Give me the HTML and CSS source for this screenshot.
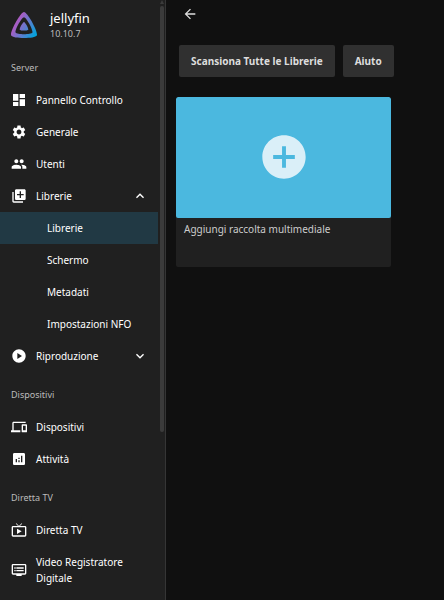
FILE: index.html
```html
<!DOCTYPE html>
<html lang="it">
<head>
<meta charset="utf-8">
<meta name="viewport" content="width=device-width, initial-scale=1">
<title>Librerie</title>
<link rel="stylesheet" href="styles.css">
</head>
<body>
<div class="app">
  <aside class="drawer">
    <nav class="nav">
      <a class="brand" href="#">
        <svg class="brand-logo" viewBox="0 0 24 24" aria-hidden="true">
          <defs>
            <linearGradient id="brand" x1="5.170" y1="10" x2="23.260" y2="20.440" gradientUnits="userSpaceOnUse">
              <stop offset="0" stop-color="#aa5cc3"/>
              <stop offset="1" stop-color="#00a4dc"/>
            </linearGradient>
          </defs>
          <path fill="url(#brand)" d="M12 .002C8.826.002-1.398 18.537.16 21.666c1.56 3.129 22.14 3.094 23.682 0C25.384 18.573 15.177 0 12 0zm7.76 18.949c-1.008 2.028-14.493 2.05-15.514 0C3.224 16.9 9.92 4.755 12.003 4.755c2.081 0 8.77 12.166 7.759 14.196zM12 9.198c-1.054 0-4.446 6.15-3.93 7.189.518 1.04 7.348 1.027 7.86 0 .511-1.027-2.874-7.19-3.93-7.19z"/>
        </svg>
        <span class="brand-text">
          <span class="brand-name">jellyfin</span>
          <span class="brand-version">10.10.7</span>
        </span>
      </a>

      <h2 class="subheader">Server</h2>
      <a class="item" href="#">
        <svg class="icon" viewBox="0 0 24 24" aria-hidden="true"><path d="M3 13h8V3H3v10zm0 8h8v-6H3v6zm10 0h8V11h-8v10zm0-18v6h8V3h-8z"/></svg>
        <span class="label">Pannello Controllo</span>
      </a>
      <a class="item" href="#">
        <svg class="icon" viewBox="0 0 24 24" aria-hidden="true"><path d="M19.14 12.94c.04-.3.06-.61.06-.94 0-.32-.02-.64-.07-.94l2.03-1.58c.18-.14.23-.41.12-.61l-1.92-3.32c-.12-.22-.37-.29-.59-.22l-2.39.96c-.5-.38-1.03-.7-1.62-.94l-.36-2.54c-.04-.24-.24-.41-.48-.41h-3.84c-.24 0-.43.17-.47.41l-.36 2.54c-.59.24-1.13.57-1.62.94l-2.39-.96c-.22-.08-.47 0-.59.22L2.74 8.87c-.12.21-.08.47.12.61l2.03 1.58c-.05.3-.09.63-.09.94s.02.64.07.94l-2.03 1.58c-.18.14-.23.41-.12.61l1.92 3.32c.12.22.37.29.59.22l2.39-.96c.5.38 1.03.7 1.62.94l.36 2.54c.05.24.24.41.48.41h3.84c.24 0 .44-.17.47-.41l.36-2.54c.59-.24 1.13-.56 1.62-.94l2.39.96c.22.08.47 0 .59-.22l1.92-3.32c.12-.22.07-.47-.12-.61l-2.01-1.58zM12 15.6c-1.98 0-3.6-1.62-3.6-3.6s1.62-3.6 3.6-3.6 3.6 1.62 3.6 3.6-1.62 3.6-3.6 3.6z"/></svg>
        <span class="label">Generale</span>
      </a>
      <a class="item" href="#">
        <svg class="icon" viewBox="0 0 24 24" aria-hidden="true"><path d="M16 11c1.66 0 2.99-1.34 2.99-3S17.66 5 16 5c-1.66 0-3 1.34-3 3s1.34 3 3 3zm-8 0c1.66 0 2.99-1.34 2.99-3S9.66 5 8 5C6.34 5 5 6.34 5 8s1.34 3 3 3zm0 2c-2.33 0-7 1.17-7 3.5V19h14v-2.5c0-2.33-4.67-3.5-7-3.5zm8 0c-.29 0-.62.02-.97.05 1.16.84 1.97 1.97 1.97 3.45V19h6v-2.5c0-2.33-4.67-3.5-7-3.5z"/></svg>
        <span class="label">Utenti</span>
      </a>
      <button class="item" type="button" aria-expanded="true" aria-controls="libraries">
        <svg class="icon" viewBox="0 0 24 24" aria-hidden="true"><path d="M4 6H2v14c0 1.1.9 2 2 2h14v-2H4V6zm16-4H8c-1.1 0-2 .9-2 2v12c0 1.1.9 2 2 2h12c1.1 0 2-.9 2-2V4c0-1.1-.9-2-2-2zm-1 9h-4v4h-2v-4H9V9h4V5h2v4h4v2z"/></svg>
        <span class="label">Librerie</span>
        <svg class="icon" viewBox="0 0 24 24" aria-hidden="true"><path d="M12 8l-6 6 1.410 1.410L12 10.830l4.590 4.580L18 14z"/></svg>
      </button>
      <div class="submenu" id="libraries">
        <a class="item item-nested is-selected" href="#" aria-current="page"><span class="label">Librerie</span></a>
        <a class="item item-nested" href="#"><span class="label">Schermo</span></a>
        <a class="item item-nested" href="#"><span class="label">Metadati</span></a>
        <a class="item item-nested" href="#"><span class="label">Impostazioni NFO</span></a>
      </div>
      <button class="item" type="button" aria-expanded="false">
        <svg class="icon" viewBox="0 0 24 24" aria-hidden="true"><path d="M12 2C6.480 2 2 6.480 2 12s4.480 10 10 10 10-4.480 10-10S17.520 2 12 2zM9.500 16.500v-9l7 4.500-7 4.500z"/></svg>
        <span class="label">Riproduzione</span>
        <svg class="icon" viewBox="0 0 24 24" aria-hidden="true"><path d="M16.590 8.590L12 13.170 7.410 8.590 6 10l6 6 6-6z"/></svg>
      </button>

      <h2 class="subheader">Dispositivi</h2>
      <a class="item" href="#">
        <svg class="icon" viewBox="0 0 24 24" aria-hidden="true"><path d="M4 6h18V4H4c-1.100 0-2 .9-2 2v11H0v3h14v-3H4V6zm19 2h-6c-.55 0-1 .45-1 1v10c0 .55.45 1 1 1h6c.55 0 1-.45 1-1V9c0-.55-.45-1-1-1zm-1 9h-4v-7h4v7z"/></svg>
        <span class="label">Dispositivi</span>
      </a>
      <a class="item" href="#">
        <svg class="icon" viewBox="0 0 24 24" aria-hidden="true"><path d="M19 3H5c-1.100 0-2 .9-2 2v14c0 1.100.9 2 2 2h14c1.100 0 2-.9 2-2V5c0-1.100-.9-2-2-2zM9 17H7v-5h2v5zm4 0h-2v-3h2v3zm0-5h-2v-2h2v2zm4 5h-2V7h2v10z"/></svg>
        <span class="label">Attività</span>
      </a>

      <h2 class="subheader">Diretta TV</h2>
      <a class="item" href="#">
        <svg class="icon" viewBox="0 0 24 24" aria-hidden="true"><path d="M21 6h-7.590l3.290-3.290L16 2l-4 4-4-4-.71.71L10.590 6H3c-1.100 0-2 .89-2 2v12c0 1.100.9 2 2 2h18c1.100 0 2-.9 2-2V8c0-1.110-.9-2-2-2zm0 14H3V8h18v12zM9 10v8l7-4z"/></svg>
        <span class="label">Diretta TV</span>
      </a>
      <a class="item" href="#">
        <svg class="icon" viewBox="0 0 24 24" aria-hidden="true"><path d="M21 3H3c-1.100 0-2 .9-2 2v12c0 1.100.9 2 2 2h5v2h8v-2h5c1.100 0 1.990-.9 1.990-2L23 5c0-1.100-.9-2-2-2zm0 14H3V5h18v12zm-2-9H8v2h11V8zm0 4H8v2h11v-2zM7 8H5v2h2V8zm0 4H5v2h2v-2z"/></svg>
        <span class="label">Video Registratore Digitale</span>
      </a>
    </nav>
    <div class="scrollbar" aria-hidden="true"><span class="scroll-arrow"></span><span class="scroll-thumb"></span></div>
  </aside>

  <main class="content">
    <button class="back" type="button" aria-label="Indietro">
      <svg class="icon" viewBox="0 0 24 24" aria-hidden="true"><path d="M20 11H7.830l5.590-5.590L12 4l-8 8 8 8 1.410-1.410L7.830 13H20v-2z"/></svg>
    </button>
    <div class="actions">
      <button class="action" type="button">Scansiona Tutte le Librerie</button>
      <a class="action" href="#">Aiuto</a>
    </div>
    <div class="cards">
      <button class="card" type="button">
        <span class="card-image">
          <svg class="card-icon" viewBox="0 0 24 24" aria-hidden="true"><path d="M12 2C6.480 2 2 6.480 2 12s4.480 10 10 10 10-4.480 10-10S17.520 2 12 2zm5 10.900h-4.100v4.100h-1.800v-4.100H7v-1.800h4.100V7h1.800v4.100H17v1.800z"/></svg>
        </span>
        <span class="card-title">Aggiungi raccolta multimediale</span>
      </button>
    </div>
  </main>
</div>
</body>
</html>
```
FILE: styles.css
```css
* {
  box-sizing: border-box;
}

body {
  margin: 0;
  background: #101010;
  color: #fff;
  font: 10px/16px "Noto Sans", sans-serif;
}

a {
  color: inherit;
  text-decoration: none;
}

button {
  border: 0;
  background: none;
  color: inherit;
  font: inherit;
  text-align: left;
  cursor: pointer;
}

.app {
  display: flex;
  height: 100vh;
}

.drawer {
  display: flex;
  flex: 0 0 166px;
  overflow: hidden;
  border-right: 1px solid #353535;
  background: #202020;
}

.nav {
  flex: 1;
  min-width: 0;
}

.brand {
  display: flex;
  align-items: center;
  gap: 13px;
  height: 45px;
  padding: 5px 11px 0;
}

.brand-logo {
  width: 26px;
  height: 26px;
}

.brand-text {
  display: flex;
  flex-direction: column;
}

.brand-name {
  font-size: 13px;
  line-height: 18px;
}

.brand-version {
  color: #bcbcbc;
  font-size: 9px;
  line-height: 14px;
}

.subheader {
  margin: 6px 0 0;
  padding: 0 11px;
  color: #bcbcbc;
  font-size: 9px;
  font-weight: 400;
  line-height: 33px;
}

.item {
  display: flex;
  align-items: center;
  gap: 9px;
  width: 100%;
  min-height: 32px;
  padding: 8px 10px 8px 11px;
}

.item-nested {
  padding-left: 47px;
}

.is-selected {
  background: #213944;
}

.label {
  flex: 1;
}

.icon {
  flex: none;
  width: 16px;
  height: 16px;
  fill: currentColor;
}

.scrollbar {
  display: flex;
  flex: 0 0 7px;
  flex-direction: column;
  align-items: center;
  gap: 2px;
}

.scroll-arrow {
  border: 2px solid transparent;
  border-top-width: 0;
  border-bottom: 4px solid #3b3b3b;
}

.scroll-thumb {
  width: 4px;
  height: 71%;
  border-radius: 2px;
  background: #3b3b3b;
}

.content {
  flex: 1;
  min-width: 0;
  padding: 6px 10px;
}

.back {
  display: block;
  padding: 0 6px;
  color: #ddd;
}

.back .icon {
  display: block;
}

.actions {
  display: flex;
  gap: 8px;
  padding: 23px 3px 0;
}

.action {
  padding: 8px 12px;
  border-radius: 2px;
  background: #303030;
  color: #ddd;
  font-weight: 700;
}

.cards {
  display: grid;
  grid-template-columns: repeat(auto-fill, minmax(200px, 215px));
  gap: 10px;
  padding-top: 20px;
}

.card {
  display: flex;
  flex-direction: column;
  min-height: 170px;
  padding: 0;
  border-radius: 2px;
  background: #202020;
  overflow: hidden;
}

.card-image {
  display: flex;
  align-items: center;
  justify-content: center;
  width: 100%;
  aspect-ratio: 16 / 9;
  border-radius: 2px;
  background: #4bb8df;
}

.card-icon {
  width: 52px;
  height: 52px;
  fill: #daeff8;
}

.card-title {
  padding: 3px 8px;
  color: #ccc;
}
```
